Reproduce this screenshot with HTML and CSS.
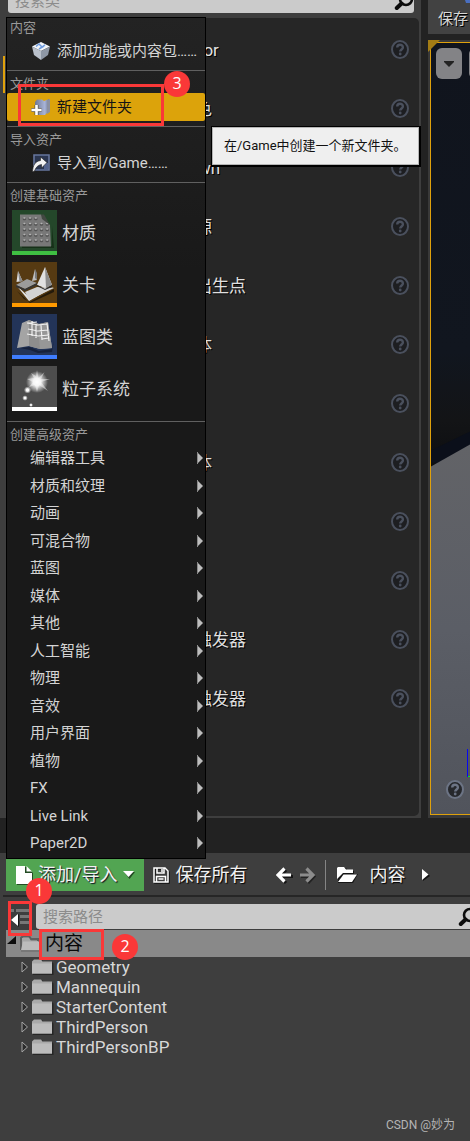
FILE: index.html
```html
<!DOCTYPE html>
<html lang="zh-CN">
<head>
<meta charset="utf-8">
<meta name="viewport" content="width=device-width, initial-scale=1">
<title>内容浏览器</title>
<link rel="stylesheet" href="styles.css">
</head>
<body>
<svg class="defs" aria-hidden="true">
  <symbol id="help" viewBox="0 0 18 19">
    <ellipse cx="9" cy="9.5" rx="8" ry="8.500" fill="#1b1d20" fill-opacity=".8" stroke="currentColor" stroke-width="2"/>
    <path d="M6.200 7.600C6.200 5.600 7.400 4.800 9 4.800s2.900 1 2.900 2.600c0 2-2.700 2.200-2.700 4.200" fill="none" stroke="currentColor" stroke-width="2.400"/>
    <circle cx="9.200" cy="14" r="1.400" fill="currentColor"/>
  </symbol>
  <symbol id="search" viewBox="0 0 20 20">
    <circle cx="12" cy="8" r="6" fill="none" stroke="#0c0c0c" stroke-width="2.600"/>
    <path d="M7.500 12.500 2.800 17" stroke="#0c0c0c" stroke-width="4" stroke-linecap="round"/>
  </symbol>
  <symbol id="sub" viewBox="0 0 6 12">
    <path d="M0 0 6 6 0 12z" fill="#bdbdbd"/><path d="M0 0h1v12H0z" fill="#8a8a8a"/>
  </symbol>
  <symbol id="folder" viewBox="0 0 22 17">
    <path d="M1 3.500 3 1h7l2 2.500h8.500l1 1V16H1z" fill="#1f1f1f" opacity=".75"/>
    <path d="M0 2.500 2 .5h7l1.500 2H20V14.500H0z" fill="#a9a9a9"/>
    <path d="M0 4.500h20v10H0z" fill="#bcbcbc"/>
  </symbol>
  <symbol id="closed" viewBox="0 0 8 12">
    <path d="M1 1v10l5.500-5z" fill="#2c2c2c" stroke="#a6a6a6" stroke-width="1"/>
  </symbol>
</svg>

<main class="workspace">
  <section class="placement" aria-label="放置Actor">
    <label class="search-box search-top">
      <input class="search-input" type="text" placeholder="搜索类" aria-label="搜索类">
      <svg class="search-icon"><use href="#search"/></svg>
    </label>
    <ul class="actors">
      <li class="actor"><span>空Actor</span><svg class="help"><use href="#help"/></svg></li>
      <li class="actor"><span>空角色</span><svg class="help"><use href="#help"/></svg></li>
      <li class="actor"><span>空Pawn</span><svg class="help"><use href="#help"/></svg></li>
      <li class="actor"><span>点光源</span><svg class="help"><use href="#help"/></svg></li>
      <li class="actor"><span>玩家出生点</span><svg class="help"><use href="#help"/></svg></li>
      <li class="actor"><span>立方体</span><svg class="help"><use href="#help"/></svg></li>
      <li class="actor"><svg class="help"><use href="#help"/></svg></li>
      <li class="actor"><span>圆柱体</span><svg class="help"><use href="#help"/></svg></li>
      <li class="actor"><svg class="help"><use href="#help"/></svg></li>
      <li class="actor"><svg class="help"><use href="#help"/></svg></li>
      <li class="actor"><span>盒体触发器</span><svg class="help"><use href="#help"/></svg></li>
      <li class="actor"><span>球体触发器</span><svg class="help"><use href="#help"/></svg></li>
    </ul>
    <span class="tab-mark"></span>
  </section>

  <section class="level" aria-label="视口">
    <div class="level-tools">
      <svg class="save-corner" viewBox="0 0 5 3"><path d="M0 0h5v3H1z" fill="#4a6fc0"/></svg>
      <button class="level-save" type="button">保存</button>
    </div>
    <div class="viewport">
      <svg class="scene" viewBox="0 0 40 772" preserveAspectRatio="none" aria-hidden="true">
        <defs>
          <linearGradient id="wall" x1="0" y1="0" x2="0" y2="1">
            <stop offset="0" stop-color="#10141d"/><stop offset=".72" stop-color="#11161f"/><stop offset=".88" stop-color="#131416"/><stop offset="1" stop-color="#0c0d10"/>
          </linearGradient>
          <linearGradient id="floor" x1="0" y1="0" x2="0" y2="1">
            <stop offset="0" stop-color="#626367"/><stop offset=".5" stop-color="#5b5e66"/><stop offset="1" stop-color="#51545c"/>
          </linearGradient>
        </defs>
        <rect width="40" height="430" fill="url(#wall)"/>
        <path d="M0 408 40 389V420H0z" fill="#0b0f1a"/>
        <path d="M0 424 40 402V772H0z" fill="url(#floor)"/>
      </svg>
      <svg class="corner" viewBox="0 0 12 12"><path d="M0 0h12L0 12z" fill="#a37c15"/></svg>
      <div class="view-tools">
        <button class="view-button" type="button" aria-label="视口选项"><svg viewBox="0 0 10 6"><path d="M0 0h10v1L5 6 0 1z" fill="#232323"/></svg></button>
        <button class="view-button" type="button" aria-label="透视"></button>
      </div>
      <div class="view-foot">
        <svg class="axes" viewBox="0 0 3 28"><path d="M0 0h1v28H0z" fill="#0808f0"/><path d="M1 27h2v1H1z" fill="#10e810"/></svg>
        <svg class="help"><use href="#help"/></svg>
      </div>
    </div>
  </section>
</main>

<section class="browser" aria-label="内容浏览器">
  <div class="toolbar">
    <div class="add">
      <button class="add-button" type="button">
        <svg class="file-icon" viewBox="0 0 17 19"><path d="M1 1h10l6 6v12H1z" fill="#234b23"/><path d="M0 0h9v7h7v11H0z" fill="#fff"/><path d="M10.500 0 16 5.500h-5.500z" fill="#fff"/></svg>
        <span>添加/导入</span>
        <svg class="caret" viewBox="0 0 12 8"><path d="M1 1h11L6.500 8z" fill="#234b23"/><path d="M0 0h11L5.500 6z" fill="#fff"/></svg>
      </button>

      <div class="menu" role="menu">
        <section class="group">
          <h2 class="group-title">内容</h2>
          <button class="item" type="button" role="menuitem">
            <svg class="item-icon" viewBox="0 0 20 20">
              <path d="M10 1 19 5.500 10 10 1 5.500z" fill="#f2f5f9"/><path d="M1 5.500 10 10v9L3 14z" fill="#b9c0ca"/><path d="M19 5.500 10 10v9l7-5z" fill="#8e97a5"/>
              <path d="M5 5.500 8 3l3 3 3-2.200M8 8l5-3" fill="none" stroke="#6f9ce0" stroke-width="1.500"/>
            </svg>
            <span>添加功能或内容包……</span>
          </button>
        </section>
        <section class="group">
          <h2 class="group-title">文件夹</h2>
          <button class="item item-active" type="button" role="menuitem" aria-describedby="tip">
            <svg class="item-icon" viewBox="0 0 20 20">
              <defs><linearGradient id="blueFolder"><stop offset="0" stop-color="#6f7894"/><stop offset=".7" stop-color="#a9b5d8"/><stop offset="1" stop-color="#6d7792"/></linearGradient></defs>
              <path d="M4 5 6 2.500h5L13 4l5-2v12l-4 4H4z" fill="url(#blueFolder)"/><path d="M16 3.500 19 2v13l-3 2z" fill="#8b90a0"/>
              <path d="M5.500 8v10M.5 13h10" stroke="#59544a" stroke-width="4"/><path d="M5.500 8v10M.5 13h10" stroke="#fff" stroke-width="2.600"/>
            </svg>
            <span>新建文件夹</span>
          </button>
          <span class="frame frame-item"></span><span class="badge badge-item">3</span>
          <div class="tooltip" id="tip" role="tooltip">在/Game中创建一个新文件夹。</div>
        </section>
        <section class="group">
          <h2 class="group-title">导入资产</h2>
          <button class="item" type="button" role="menuitem">
            <svg class="item-icon" viewBox="0 0 20 20">
              <path d="M3 2h15v15H3z" fill="#2b3650" stroke="#66769d" stroke-width="1.600"/><path d="M13 10h4v6h-4z" fill="#53638c"/>
              <path d="M1.500 19C2 12 4 8.500 9.500 7.500V4L16 9.500 10.500 15v-3.500C7 12 5 14 3.500 18z" fill="#f3f3f3" stroke="#1b1b1b" stroke-width=".6"/>
            </svg>
            <span>导入到/Game……</span>
          </button>
        </section>
        <section class="group">
          <h2 class="group-title">创建基础资产</h2>
          <div class="assets">
            <button class="asset" type="button" role="menuitem">
              <svg class="thumb" viewBox="0 0 45 45">
                <path d="M0 0h45v45H0z" fill="#24472a"/><path d="M10 36h30V16l2 22H10z" fill="#173019"/>
                <path d="M8 4.500h21L38 15l1 21.500H8z" fill="#787878"/>
                <g fill="none" stroke-width="2.600" stroke-linecap="round" stroke-dasharray=".8 4.900">
                  <path d="M12 9h17M12 14.500h24M12 20h24M12 25.500h24M12 31h24" stroke="#525252"/>
                </g>
                <g fill="none" stroke-width="1.500" stroke-linecap="round" stroke-dasharray=".8 4.900">
                  <path d="M12 8h17M12 13.500h24M12 19h24M12 24.500h24M12 30h24" stroke="#b4b4b4"/>
                </g>
                <path d="M29 4.500h3L38 15l-8-6z" fill="#424842"/>
                <path d="M0 41h45v4H0z" fill="#3fbf42"/>
              </svg><span>材质</span>
            </button>
            <button class="asset" type="button" role="menuitem">
              <svg class="thumb" viewBox="0 0 45 45">
                <path d="M0 0h45v45H0z" fill="#563a12"/><path d="M5 29 12 37l6 3 24-13v3L18 41z" fill="#241a0b"/>
                <path d="M4 23 15 33 42 25 17 39z" fill="#e0e0e0"/><path d="m13 30 12-5 17 1-25 12z" fill="#d3d3d3"/>
                <path d="M4 23 15 17l10 4-12 6z" fill="#9b9b9b"/><path d="m4 23 9 4 12-6v2l-12 6-9-4z" fill="#343434"/>
                <path d="M6 9 4.500 20l6-1z" fill="#ddd"/><path d="m6 9 4.500 10-3 1z" fill="#888"/><path d="m23 7-3 12 5-1z" fill="#bcbcbc"/><path d="m23 7 2 4v7l-2-2z" fill="#777"/>
                <path d="m33 5-8 18 8 3 7-3z" fill="#e1e1e1"/><path d="m33 5 7 18-6 3z" fill="#8c8c8c"/><path d="m25 23 8 4 7-4v2l-7 3-8-4z" fill="#272727"/>
                <path d="M0 41h45v4H0z" fill="#ff9a00"/>
              </svg><span>关卡</span>
            </button>
            <button class="asset" type="button" role="menuitem">
              <svg class="thumb" viewBox="0 0 45 45">
                <path d="M0 0h45v45H0z" fill="#233458"/><path d="m8 34 10-1 9 4 13-2 2-9-2 12-14 1-8-3z" fill="#16213b"/>
                <path d="m10 9 7-3 10 4 9-2 4 26-12 1-11-3-12 2z" fill="#a4a4a4"/><path d="m17 6 10 4 1 25-11-3z" fill="#8d8d8d"/><path d="m27 10 9-2 4 26-12 1z" fill="#979797"/>
                <path d="M15 9l11 2 9-1M16 15l10 2 10-1M15 20l11 2 11-1M20 7v15M24 10v14M29 11l1 15M35 9l2 18M15 9l10-1M30 25l7-1" fill="none" stroke="#f1f1f1" stroke-width="1.200"/>
                <path d="M0 41h45v4H0z" fill="#3f7dff"/>
              </svg><span>蓝图类</span>
            </button>
            <button class="asset" type="button" role="menuitem">
              <svg class="thumb" viewBox="0 0 45 45">
                <defs><radialGradient id="glow"><stop offset="0" stop-color="#fff"/><stop offset=".35" stop-color="#fff" stop-opacity=".9"/><stop offset="1" stop-color="#fff" stop-opacity="0"/></radialGradient></defs>
                <path d="M0 0h45v45H0z" fill="#4d4d4d"/><circle cx="25" cy="16" r="11" fill="url(#glow)"/>
                <path d="m25 4 1.500 8 6-6-3.500 7 9 0-9 3 7 9-9-6-2 7-2-7-6 2 4-5-6-3 7-1-3-5 5 3z" fill="#fff" opacity=".45"/>
                <circle cx="15.500" cy="24" r="3.600" fill="url(#glow)"/><circle cx="15.500" cy="24" r="1.600" fill="#fff"/><circle cx="13" cy="32" r="2.800" fill="url(#glow)"/><circle cx="13" cy="32" r="1" fill="#fff"/><circle cx="19" cy="39" r="2" fill="url(#glow)"/>
                <path d="M0 41h45v4H0z" fill="#fff"/>
              </svg><span>粒子系统</span>
            </button>
          </div>
        </section>
        <section class="group">
          <h2 class="group-title">创建高级资产</h2>
          <div class="subs">
            <button class="sub" type="button" role="menuitem">编辑器工具<svg class="sub-arrow"><use href="#sub"/></svg></button>
            <button class="sub" type="button" role="menuitem">材质和纹理<svg class="sub-arrow"><use href="#sub"/></svg></button>
            <button class="sub" type="button" role="menuitem">动画<svg class="sub-arrow"><use href="#sub"/></svg></button>
            <button class="sub" type="button" role="menuitem">可混合物<svg class="sub-arrow"><use href="#sub"/></svg></button>
            <button class="sub" type="button" role="menuitem">蓝图<svg class="sub-arrow"><use href="#sub"/></svg></button>
            <button class="sub" type="button" role="menuitem">媒体<svg class="sub-arrow"><use href="#sub"/></svg></button>
            <button class="sub" type="button" role="menuitem">其他<svg class="sub-arrow"><use href="#sub"/></svg></button>
            <button class="sub" type="button" role="menuitem">人工智能<svg class="sub-arrow"><use href="#sub"/></svg></button>
            <button class="sub" type="button" role="menuitem">物理<svg class="sub-arrow"><use href="#sub"/></svg></button>
            <button class="sub" type="button" role="menuitem">音效<svg class="sub-arrow"><use href="#sub"/></svg></button>
            <button class="sub" type="button" role="menuitem">用户界面<svg class="sub-arrow"><use href="#sub"/></svg></button>
            <button class="sub" type="button" role="menuitem">植物<svg class="sub-arrow"><use href="#sub"/></svg></button>
            <button class="sub" type="button" role="menuitem">FX<svg class="sub-arrow"><use href="#sub"/></svg></button>
            <button class="sub" type="button" role="menuitem">Live Link<svg class="sub-arrow"><use href="#sub"/></svg></button>
            <button class="sub" type="button" role="menuitem">Paper2D<svg class="sub-arrow"><use href="#sub"/></svg></button>
          </div>
        </section>
      </div>
    </div>
    <button class="tool save-all" type="button">
      <svg class="disk" viewBox="0 0 17 17"><g fill="none" stroke="#111" stroke-width="1.500" transform="translate(1 1)"><path d="M1 1h11l3 3v11H1z"/></g><g fill="none" stroke="#fff" stroke-width="1.500"><path d="M1 1h11l3 3v11H1zM4 1v5h7V1M3.500 15V9.500h9V15M5.500 12h5"/><path d="M9 2v3"/></g></svg>
      <span>保存所有</span>
    </button>
    <div class="history">
      <button class="tool" type="button" aria-label="后退"><svg class="arrow" viewBox="0 0 17 17"><path d="M9 2 3 8.500 9 15M3 8.500h13" transform="translate(1 1)" fill="none" stroke="#151515" stroke-width="3"/><path d="M8.500 1.500 2 8l6.500 6.500M2 8h13" fill="none" stroke="#fff" stroke-width="3.200"/></svg></button>
      <button class="tool" type="button" aria-label="前进"><svg class="arrow" viewBox="0 0 17 17"><path d="M7 2l6 6.500L7 15M13 8.500H0" transform="translate(1 1)" fill="none" stroke="#222" stroke-width="3"/><path d="M6.500 1.500 13 8l-6.500 6.500M13 8H0" fill="none" stroke="#8c8c8c" stroke-width="3.200"/></svg></button>
    </div>
    <div class="crumbs">
      <button class="tool" type="button" aria-label="选择路径"><svg class="open-folder" viewBox="0 0 21 17"><path d="M1 1h8l2 3h6v3h4l-5 9H1z" fill="#151515"/><path d="M0 12V1l1-1h6l2 2.500h7V6H6z" fill="#fff"/><path d="M6.500 7.500H20L15 15H1z" fill="#fff"/></svg></button>
      <button class="tool crumb" type="button">内容</button>
      <svg class="crumb-arrow" viewBox="0 0 8 12"><path d="M1 1l7 6-7 5z" fill="#151515"/><path d="M0 0l6.500 5.500L0 11z" fill="#fff"/></svg>
    </div>
  </div>

  <div class="paths">
    <div class="path-search">
      <button class="tree-toggle" type="button" aria-label="显示或隐藏源面板">
        <svg viewBox="0 0 20 20"><path d="M0 2h3v3H0zM5 2h15v3H5zM9 8h11v3H9zM9 14h11v3H9z" fill="#777"/><path d="M8 7v13L0 13.500z" fill="#171717"/><path d="M7 7v12L0 13z" fill="#fff"/></svg>
        <span class="frame frame-toggle"></span><span class="badge badge-toggle">1</span>
      </button>
      <label class="search-box search-paths">
        <input class="search-input" type="text" placeholder="搜索路径" aria-label="搜索路径">
        <svg class="search-icon"><use href="#search"/></svg>
      </label>
    </div>
    <div class="root">
      <svg class="expanded" viewBox="0 0 9 9"><path d="M9 0v8H0z" fill="#0c0c0c"/></svg>
      <svg class="root-folder" viewBox="0 0 21 17"><path d="M1 15V3l2-2h6l2 3h7v4" fill="none" stroke="#5e5e5e" stroke-width="2"/><path d="M2 3h7l2 3h7v9H2z" fill="#a6a6a6"/><path d="M1 15 3 6.500h17L19 15z" fill="#bcbcbc"/><path d="M1 16h19V8" fill="none" stroke="#666"/></svg>
      <span class="root-name">内容</span>
      <span class="frame frame-root"></span><span class="badge badge-root">2</span>
    </div>
    <ul class="tree">
      <li class="node"><svg class="closed"><use href="#closed"/></svg><svg class="folder"><use href="#folder"/></svg><span>Geometry</span></li>
      <li class="node"><svg class="closed"><use href="#closed"/></svg><svg class="folder"><use href="#folder"/></svg><span>Mannequin</span></li>
      <li class="node"><svg class="closed"><use href="#closed"/></svg><svg class="folder"><use href="#folder"/></svg><span>StarterContent</span></li>
      <li class="node"><svg class="closed"><use href="#closed"/></svg><svg class="folder"><use href="#folder"/></svg><span>ThirdPerson</span></li>
      <li class="node"><svg class="closed"><use href="#closed"/></svg><svg class="folder"><use href="#folder"/></svg><span>ThirdPersonBP</span></li>
    </ul>
  </div>
  <footer class="credit">CSDN @妙为</footer>
</section>
</body>
</html>
```

FILE: styles.css
```css
* { box-sizing: border-box; }

body {
  margin: 0;
  min-height: 100vh;
  display: flex;
  flex-direction: column;
  overflow: hidden;
  background: #3e3e3e;
  color: #d8d8d8;
  font: 15px/20px Roboto, "Noto Sans CJK SC", sans-serif;
}

button {
  margin: 0;
  padding: 0;
  border: 0;
  background: none;
  color: inherit;
  font: inherit;
  text-align: left;
  white-space: nowrap;
}

svg { display: block; flex: none; }
ul { margin: 0; padding: 0; list-style: none; }
.defs { position: absolute; width: 0; height: 0; }

/* Search boxes */
.search-box {
  display: flex;
  align-items: center;
  height: 25px;
  background: #cbcbcb;
  border-radius: 3px;
}
.search-input {
  flex: 1;
  min-width: 0;
  padding: 0 7px;
  border: 0;
  outline: 0;
  background: none;
  color: #222;
  font: inherit;
}
.search-input::placeholder { color: #8c8c8c; opacity: 1; }
.search-icon { width: 20px; height: 20px; }

/* Upper area */
.workspace {
  display: flex;
  gap: 7px;
  padding-bottom: 35px;
  background: #222;
  overflow: hidden;
}
.placement {
  position: relative;
  flex: 1;
  padding: 0 2px 2px 6px;
  background: #3e3e3e;
}
.search-top { margin: -12px 5px 5px 2px; }
.actors {
  padding: 2px 10px 88px 155px;
  background: #262626;
  border-radius: 5px;
}
.actor {
  display: flex;
  align-items: center;
  height: 59px;
  color: #e0e0e0;
  font-size: 17px;
  text-shadow: 1px 1px #000;
}
.help { width: 18px; height: 19px; margin-left: auto; color: #4a505d; }
.tab-mark {
  position: absolute;
  left: 3px;
  top: 56px;
  width: 2px;
  height: 37px;
  background: #dfa10c;
}

.level {
  flex: none;
  width: 42px;
  display: flex;
  flex-direction: column;
  gap: 6px;
}
.level-tools {
  height: 34px;
  padding-left: 10px;
  background: #424242;
}
.save-corner { width: 5px; height: 3px; margin-left: auto; }
.level-save { padding-top: 6px; text-shadow: 1px 1px #000; }
.viewport {
  position: relative;
  flex: 1;
  display: flex;
  flex-direction: column;
  justify-content: space-between;
  padding: 8px 0 19px 8px;
  background: #393939;
}
.scene {
  position: absolute;
  inset: 2px 0 3px 2px;
  width: calc(100% - 2px);
  height: calc(100% - 5px);
  border: 1px solid #dfa10c;
  border-right: 0;
}
.corner { position: absolute; left: 0; top: 0; width: 12px; height: 12px; }
.view-tools { position: relative; display: flex; gap: 7px; overflow: hidden; }
.view-button {
  flex: none;
  display: grid;
  place-items: center;
  width: 26px;
  height: 31px;
  border-radius: 6px;
  background: #838386;
}
.view-button svg { width: 10px; height: 6px; }
.view-foot { position: relative; display: grid; gap: 3px; }
.view-foot .help { margin-left: 10px; color: #6c7485; }
.axes { width: 3px; height: 28px; justify-self: end; }

/* Content browser */
.browser {
  flex: 1;
  display: flex;
  flex-direction: column;
  background: #3e3e3e;
}
.toolbar {
  display: flex;
  align-items: center;
  height: 44px;
  margin-left: 3px;
  padding: 6px 0 4px 3px;
  border-bottom: 2px solid #262626;
  color: #f2f2f2;
  font-size: 18px;
}
.add { position: relative; }
.add-button {
  display: flex;
  align-items: center;
  height: 32px;
  padding: 0 9px 0 10px;
  background: #52a552;
  text-shadow: 1px 1px 1px #112;
}
.file-icon { width: 17px; height: 19px; margin-right: 5px; }
.caret { width: 12px; height: 8px; margin-left: 6px; }
.tool { display: flex; align-items: center; text-shadow: 1px 1px 1px #000; }
.save-all { gap: 5px; margin-left: 9px; }
.disk { width: 17px; height: 17px; }
.history {
  display: flex;
  align-items: center;
  gap: 7px;
  height: 30px;
  margin-left: 29px;
  padding-right: 8px;
  border-right: 1px solid #858585;
}
.arrow { width: 17px; height: 17px; }
.crumbs { display: flex; align-items: center; margin-left: 11px; }
.open-folder { width: 21px; height: 17px; }
.crumb { margin: 0 17px 0 11px; }
.crumb-arrow { width: 8px; height: 12px; }

/* Drop-up menu */
.menu {
  position: absolute;
  left: 0;
  bottom: 100%;
  z-index: 2;
  width: 200px;
  padding-bottom: 1px;
  border: 1px solid #000;
  background: linear-gradient(#232323, #191919 30%);
  color: #d4d4d4;
  font-size: 15px;
}
.group {
  position: relative;
  padding: 4px 0 5px;
  border-top: 1px solid #606060;
}
.group:first-child { padding-top: 1px; border-top: 0; }
.group:last-child { padding-bottom: 0; }
.group-title {
  margin: 0 0 1px;
  padding-left: 3px;
  color: #999;
  font-size: 13px;
  font-weight: 400;
  line-height: 17px;
}
.item {
  display: flex;
  align-items: center;
  gap: 6px;
  width: 100%;
  height: 28px;
  padding-left: 24px;
}
.item-active { border-radius: 2px; background: #dca30b; color: #151515; }
.item-icon { width: 20px; height: 20px; }
.assets { display: grid; gap: 7px; padding: 5px 0 5px 5px; }
.asset { display: flex; align-items: center; gap: 5px; font-size: 17px; }
.thumb { width: 45px; height: 45px; }
.sub {
  display: flex;
  align-items: center;
  justify-content: space-between;
  width: 100%;
  height: 27px;
  padding: 0 2px 0 23px;
}
.sub:nth-child(odd) { height: 28px; }
.sub-arrow { width: 6px; height: 12px; }

.tooltip {
  position: absolute;
  left: 204px;
  top: 55px;
  padding: 9px 12px;
  border: 1px solid #000;
  border-width: 1px 2px 2px 1px;
  box-shadow: inset 0 0 0 1px #b5b5b5;
  background: #efefef;
  color: #111;
  font-size: 13px;
  white-space: nowrap;
}

/* Numbered callouts */
.frame { position: absolute; border: 3px solid #fa3838; }
.badge {
  position: absolute;
  width: 26px;
  height: 26px;
  border-radius: 50%;
  background: #fa3838;
  color: #fff;
  font: 16px/25px "Open Sans", sans-serif;
  text-align: center;
  text-shadow: none;
}
.frame-item { left: 11px; top: 13px; width: 146px; height: 42px; }
.badge-item { left: 157px; top: 0; }
.frame-toggle { left: -3px; top: -3px; width: 24px; height: 35px; }
.badge-toggle { left: 15px; top: -26px; }
.frame-root { left: 33px; top: -1px; width: 65px; height: 31px; }
.badge-root { left: 106px; top: 4px; }

/* Path tree */
.paths { padding: 7px 0 0 6px; }
.path-search { display: flex; gap: 5px; padding-left: 5px; }
.tree-toggle { position: relative; z-index: 3; width: 20px; height: 25px; }
.tree-toggle svg { width: 20px; height: 20px; }
.search-paths { flex: 1; margin-right: -8px; }
.root {
  position: relative;
  display: flex;
  align-items: center;
  height: 27px;
  margin-top: 1px;
  background: #898989;
}
.expanded { width: 9px; height: 9px; margin: 0 4px 6px 1px; }
.root-folder { width: 21px; height: 17px; }
.root-name { margin-left: 4px; color: #080808; font-size: 19px; line-height: 24px; }
.node {
  display: flex;
  align-items: center;
  height: 20px;
  padding-left: 15px;
  font-size: 17px;
}
.closed { width: 8px; height: 12px; margin-right: 3px; }
.folder { width: 22px; height: 17px; margin-right: 2px; }
.credit {
  margin-top: auto;
  padding: 0 15px 6px 0;
  color: #b4b4b4;
  font-size: 12px;
  text-align: right;
}
```
